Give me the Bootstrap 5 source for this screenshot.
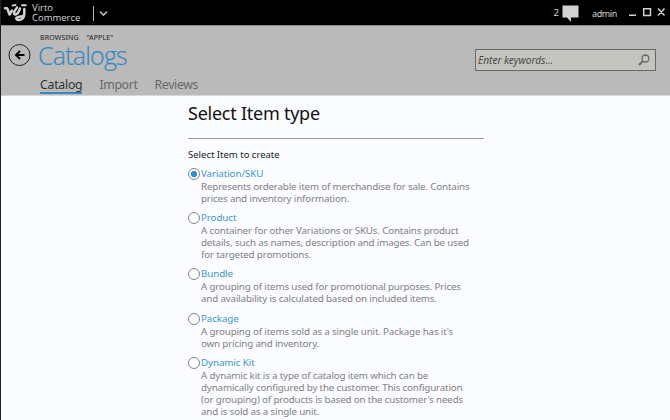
<!DOCTYPE html>
<html lang="en">
<head>
<meta charset="utf-8">
<meta name="viewport" content="width=device-width, initial-scale=1">
<title>Virto Commerce - Catalogs</title>
<link href="https://cdn.jsdelivr.net/npm/bootstrap@5.3.0/dist/css/bootstrap.min.css" rel="stylesheet">
<style>
body{font-family:"Noto Sans","Open Sans",sans-serif;background:#fbfcff;width:670px;height:420px;overflow:hidden;border-left:1px solid #222;line-height:1}
svg{display:block;flex:none}
.topbar{height:26px;background:#000;color:#d4d4d4;margin-left:-1px;border-bottom:1px solid #8a8a8a}
.brand{font-family:"Open Sans",sans-serif;font-size:9.5px;line-height:10px;margin-left:4px;width:61px;padding-top:3px}
.user{font-size:9px}
.count{padding:8px 3px 0 0;font-size:9.5px}
.admin{width:50px;padding:9px 0 0 13px;letter-spacing:-.4px}
.head{height:70px;background:#bababa;border-bottom:1px solid #d6d6d6}
.titles{margin-left:2px}
.crumb{font-size:7.1px;line-height:8px;color:#222;letter-spacing:.1px;padding-top:7px;white-space:pre}
.big{font-family:"Open Sans",sans-serif;font-size:25px;line-height:30px;color:#3b87bd;font-weight:300;margin:-1px 0 0 -2px;height:30px;letter-spacing:-.8px;-webkit-text-stroke:.2px #3b87bd}
.tabs{font-size:12.3px;line-height:15px;color:#686868;gap:17px;margin-top:7px;letter-spacing:-.35px}
.tabs .current{color:#333;border-bottom:2px solid #3b87bd;height:17px;letter-spacing:-.25px}
.search{width:181px;height:22px;margin:23px 14px 0 0;background:#c4c4be;border:1px solid #686868;font-size:10.1px;font-style:italic;color:#4a4a4a;padding:0 5px 0 2px}
.panel{width:296px;margin-left:187px}
.heading{font-size:18px;line-height:24px;font-weight:400;color:#111;padding-top:5px;height:43px;border-bottom:1px solid #a0a0a0;letter-spacing:-.25px}
.lead-in{font-size:9.5px;line-height:14px;color:#222;padding-top:9px;height:28px}
.choice{padding-bottom:6.100px;gap:1px}
.dot{width:12px;height:12px;border:1px solid #858585;border-radius:50%;margin-top:1px;background:#fff;flex:none}
.dot.on{background:radial-gradient(circle,#2f8fd0 0 2.800px,#fff 3.400px)}
.name{font-size:9.8px;line-height:14px;color:#3c96d2;letter-spacing:-.1px}
.desc{font-size:9.8px;line-height:12.050px;color:#818181;white-space:nowrap;letter-spacing:-.17px}
</style>
<script src="https://cdn.jsdelivr.net/npm/bootstrap@5.3.0/dist/js/bootstrap.bundle.min.js"></script>
</head>
<body>
<header class="topbar d-flex align-items-start">
  <svg width="28" height="25" viewBox="0 0 28 25" fill="none" stroke="#d2d2d2" stroke-linejoin="round" stroke-linecap="round"><path d="M5 8.300h2c1 .3 1.300 4.500 2.600 6.200L12 10.500" stroke-width="2.500"/><path d="M12.500 5.600l3-.6" stroke-width="1.800"/><path d="M17 7.500c-1.200 2.500-4 4.500-2.700 6.500 1.500 1.300 3.500-.5 4.700-3l1-2.500" stroke-width="2.500"/><path d="M22 5.200h3.800" stroke-width="2"/><path d="M24.300 9v5c0 3.500-2.300 6-5.700 6-2.500 0-3-2-1.300-2.700 2-.8 4.500-.3 6.500-1.700" stroke-width="2.500"/></svg>
  <div class="brand">Virto<br>Commerce</div>
  <svg width="18" height="25" fill="none" stroke="#bbb" viewBox="1 0 18 25"><path d="M1.500 6v15"/><path d="M8 11.500l3.500 3.500 3.500-3.500" stroke-width="1.600"/></svg>
  <div class="ms-auto d-flex user">
    <span class="count">2</span>
    <svg width="17" height="25" fill="#d2d2d2"><path d="M.5 5.500h16v12H9V22l-4-4.500H.5z"/></svg>
    <span class="admin">admin</span>
    <svg width="41" height="25" fill="none" stroke="#d2d2d2" stroke-width="1.500"><path d="M0 15.200h7M14.700 8.700h6.800v6.800h-6.800zM29 8.500l6.500 7m0-7l-6.500 7"/></svg>
  </div>
</header>
<section class="head d-flex">
  <svg width="37" height="60" fill="none" stroke="#222"><circle cx="18.500" cy="29" r="10.500"/><path d="M23.500 29H15m4-4l-4 4 4 4" stroke="#000" stroke-width="1.900"/></svg>
  <div class="titles">
    <div class="crumb">BROWSING    "APPLE"</div>
    <h1 class="big">Catalogs</h1>
    <nav class="tabs d-flex"><span class="current">Catalog</span><span>Import</span><span>Reviews</span></nav>
  </div>
  <div class="search ms-auto d-flex align-items-center justify-content-between"><span>Enter keywords...</span>
    <svg width="12" height="12" fill="none" stroke="#666" stroke-width="1.300"><circle cx="7.500" cy="4.500" r="3.500"/><path d="M5 7L1 11" stroke-width="1.800"/></svg>
  </div>
</section>
<main class="panel">
  <h2 class="heading mb-0">Select Item type</h2>
  <div class="lead-in">Select Item to create</div>
  <div class="choice d-flex"><span class="dot on"></span><div><div class="name">Variation/SKU</div><div class="desc">Represents orderable item of merchandise for sale. Contains<br>prices and inventory information.</div></div></div>
  <div class="choice d-flex"><span class="dot"></span><div><div class="name">Product</div><div class="desc">A container for other Variations or SKUs. Contains product<br>details, such as names, description and images. Can be used<br>for targeted promotions.</div></div></div>
  <div class="choice d-flex"><span class="dot"></span><div><div class="name">Bundle</div><div class="desc">A grouping of items used for promotional purposes. Prices<br>and availability is calculated based on included items.</div></div></div>
  <div class="choice d-flex"><span class="dot"></span><div><div class="name">Package</div><div class="desc">A grouping of items sold as a single unit. Package has it's<br>own pricing and inventory.</div></div></div>
  <div class="choice d-flex"><span class="dot"></span><div><div class="name">Dynamic Kit</div><div class="desc">A dynamic kit is a type of catalog item which can be<br>dynamically configured by the customer. This configuration<br>(or grouping) of products is based on the customer's needs<br>and is sold as a single unit.</div></div></div>
</main>
</body>
</html>
